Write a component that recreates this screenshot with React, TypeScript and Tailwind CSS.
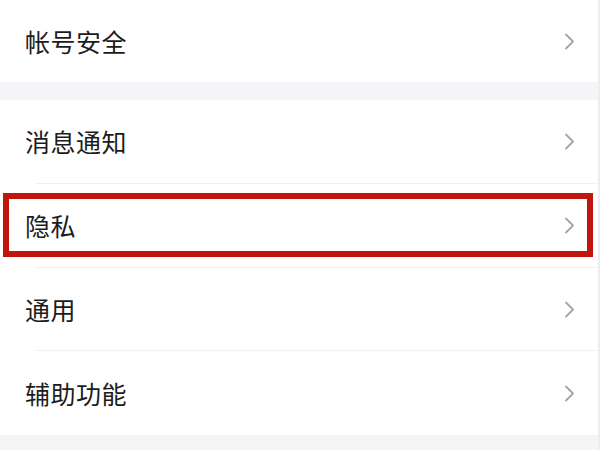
import React from "react";

const Chevron = () => (
  <svg width="11" height="17" viewBox="0 0 11 17" fill="none" className="shrink-0">
    <path d="M2 1.5 L9 8.5 L2 15.5" stroke="#a3a3a3" strokeWidth="1.8" strokeLinecap="round" strokeLinejoin="round" />
  </svg>
);

const font = { fontFamily: '"Noto Sans CJK SC", "Noto Sans", sans-serif' };

const Label = ({ children }: { children: React.ReactNode }) => (
  <span className="text-[25px] leading-none text-[#1c1c1c] tracking-[0.5px]" style={font}>
    {children}
  </span>
);

const Row = ({ label, h }: { label: string; h: string }) => (
  <div className={`flex items-center justify-between pl-[25px] pr-[23px] ${h}`}>
    <Label>{label}</Label>
    <Chevron />
  </div>
);

const Sep = () => <div className="ml-[36px] h-px bg-[#f1f1f3]" />;

export default function App() {
  return (
    <div className="w-[600px] h-[450px] overflow-hidden bg-white border-r-2 border-[#ededf0] flex flex-col">
      <div className="flex items-center justify-between pl-[25px] pr-[23px] h-[82px]">
        <Label>帐号安全</Label>
        <Chevron />
      </div>
      <div className="h-[18px] bg-[#f5f5f8]" />
      <Row label="消息通知" h="h-[83px]" />
      <Sep />
      <div className="h-[83px] pl-[3px] pr-[5px] pt-[9px] pb-[10px]">
        <div className="h-full border-[6px] border-[#c1160d] flex items-center justify-between pl-[16px] pr-[12px]">
          <Label>隐私</Label>
          <Chevron />
        </div>
      </div>
      <Sep />
      <Row label="通用" h="h-[82px]" />
      <Sep />
      <Row label="辅助功能" h="h-[84px]" />
      <div className="flex-1 bg-[#f5f5f8]" />
    </div>
  );
}
